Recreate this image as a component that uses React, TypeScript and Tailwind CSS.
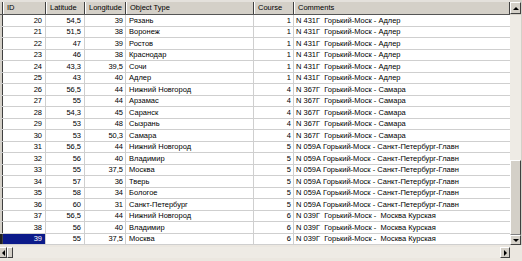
import React from 'react';

type Row = [number, string, string, string, number, string];

const C1 = 'N 431Г  Горький-Моск - Адлер';
const C4 = 'N 367Г  Горький-Моск - Самара';
const C5 = 'N 059А Горький-Моск - Санкт-Петербург-Главн';
const C6 = 'N 039Г  Горький-Моск -  Москва Курская';

const rows: Row[] = [
  [20, '54,5', '39', 'Рязань', 1, C1],
  [21, '51,5', '38', 'Воронеж', 1, C1],
  [22, '47', '39', 'Ростов', 1, C1],
  [23, '46', '38', 'Краснодар', 1, C1],
  [24, '43,3', '39,5', 'Сочи', 1, C1],
  [25, '43', '40', 'Адлер', 1, C1],
  [26, '56,5', '44', 'Нижний Новгород', 4, C4],
  [27, '55', '44', 'Арзамас', 4, C4],
  [28, '54,3', '45', 'Саранск', 4, C4],
  [29, '53', '48', 'Сызрань', 4, C4],
  [30, '53', '50,3', 'Самара', 4, C4],
  [31, '56,5', '44', 'Нижний Новгород', 5, C5],
  [32, '56', '40', 'Владимир', 5, C5],
  [33, '55', '37,5', 'Москва', 5, C5],
  [34, '57', '36', 'Тверь', 5, C5],
  [35, '58', '34', 'Бологое', 5, C5],
  [36, '60', '31', 'Санкт-Петербург', 5, C5],
  [37, '56,5', '44', 'Нижний Новгород', 6, C6],
  [38, '56', '40', 'Владимир', 6, C6],
  [39, '55', '37,5', 'Москва', 6, C6],
];

const cols = [
  { title: 'ID', w: 'w-[43px]' },
  { title: 'Latitude', w: 'w-[39px]' },
  { title: 'Longitude', w: 'w-[41px]' },
  { title: 'Object Type', w: 'w-[128px]' },
  { title: 'Course', w: 'w-[40px]' },
  { title: 'Comments', w: 'flex-1' },
];

function Arrow({ dir }: { dir: 'up' | 'down' | 'left' | 'right' }) {
  const pts = {
    up: '0,3 3,0 6,3',
    down: '0,0 6,0 3,3',
    left: '3,0 3,6 0,3',
    right: '0,0 0,6 3,3',
  }[dir];
  const vertical = dir === 'up' || dir === 'down';
  return (
    <svg width={vertical ? 6 : 3} height={vertical ? 3 : 6} viewBox={vertical ? '0 0 6 3' : '0 0 3 6'}>
      <polygon points={pts} fill="#000" />
    </svg>
  );
}

function Button({ dir, className }: { dir: 'up' | 'down' | 'left' | 'right'; className: string }) {
  return (
    <div
      className={`flex items-center justify-center bg-[#d4d0c8] border-t border-l border-t-white border-l-white border-r border-b border-r-[#404040] border-b-[#404040] ${className}`}
    >
      <Arrow dir={dir} />
    </div>
  );
}

export default function App() {
  return (
    <div
      className="w-[522px] h-[261px] bg-[#ebe7e0] flex flex-col overflow-hidden text-black text-[7.5px] leading-none"
      style={{ fontFamily: '"Liberation Sans", Arial, sans-serif' }}
    >
      <div className="flex h-[245px]">
        {/* grid */}
        <div className="w-[510px] flex flex-col bg-white">
          <div className="flex h-[15px] bg-[#d4d0c8] border-t-2 border-t-[#e4e1dc] border-b border-b-[#555]">
            <div className="w-[3px] border-r border-r-[#404040]" />
            {cols.map((c) => (
              <div
                key={c.title}
                className={`${c.w} shrink-0 flex items-center pl-[3px] border-l border-l-white border-r border-r-[#404040] whitespace-nowrap`}
              >
                {c.title}
              </div>
            ))}
          </div>
          {rows.map((r, i) => {
            const selected = i === rows.length - 1;
            return (
              <div key={r[0]} className="flex h-[11.5px] border-b border-b-[#cfcfcf]">
                <div
                  className={`w-[3px] shrink-0 border-r border-r-[#404040] ${selected ? 'bg-[#202020]' : 'bg-[#d4d0c8]'}`}
                />
                <div
                  className={`w-[43px] shrink-0 flex items-center justify-end pr-[3px] border-r border-r-[#cfcfcf] ${selected ? 'bg-[#0b1a8a] text-white' : ''}`}
                >
                  {r[0]}
                </div>
                <div className="w-[39px] shrink-0 flex items-center justify-end pr-[3px] border-r border-r-[#cfcfcf]">
                  {r[1]}
                </div>
                <div className="w-[41px] shrink-0 flex items-center justify-end pr-[2px] border-r border-r-[#cfcfcf]">
                  {r[2]}
                </div>
                <div className="w-[128px] shrink-0 flex items-center pl-[3px] border-r border-r-[#cfcfcf] whitespace-nowrap overflow-hidden">
                  {r[3]}
                </div>
                <div className="w-[40px] shrink-0 flex items-center justify-end pr-[2px] border-r border-r-[#cfcfcf]">
                  {r[4]}
                </div>
                <div className="flex-1 flex items-center pl-[2px] whitespace-pre overflow-hidden">{r[5]}</div>
              </div>
            );
          })}
        </div>
        {/* vertical scrollbar */}
        <div className="w-[12px] flex flex-col bg-[#d4d0c8] pr-[1px]">
          <div className="h-[15px] pt-[2px] pb-[1px]">
            <Button dir="up" className="h-full" />
          </div>
          <div className="h-[145px] bg-[#eeebe5]" />
          <div className="flex-1 bg-[#d4d0c8] border-t border-l border-t-white border-l-white border-r border-b border-r-[#404040] border-b-[#808080]" />
          <Button dir="down" className="h-[10px]" />
        </div>
      </div>
      {/* horizontal scrollbar */}
      <div className="flex h-[16px] pt-[2px]">
        <div className="w-[510px] h-[11px] flex bg-[#eeebe5]">
          <Button dir="left" className="w-[7px] h-full border-l-0" />
          <div className="w-[6px] h-full bg-[#d4d0c8] border-t border-l border-t-white border-l-white border-r border-b border-r-[#404040] border-b-[#404040]" />
          <div className="flex-1" />
          <Button dir="right" className="w-[10px] h-full" />
        </div>
        <div className="flex-1" />
      </div>
    </div>
  );
}
